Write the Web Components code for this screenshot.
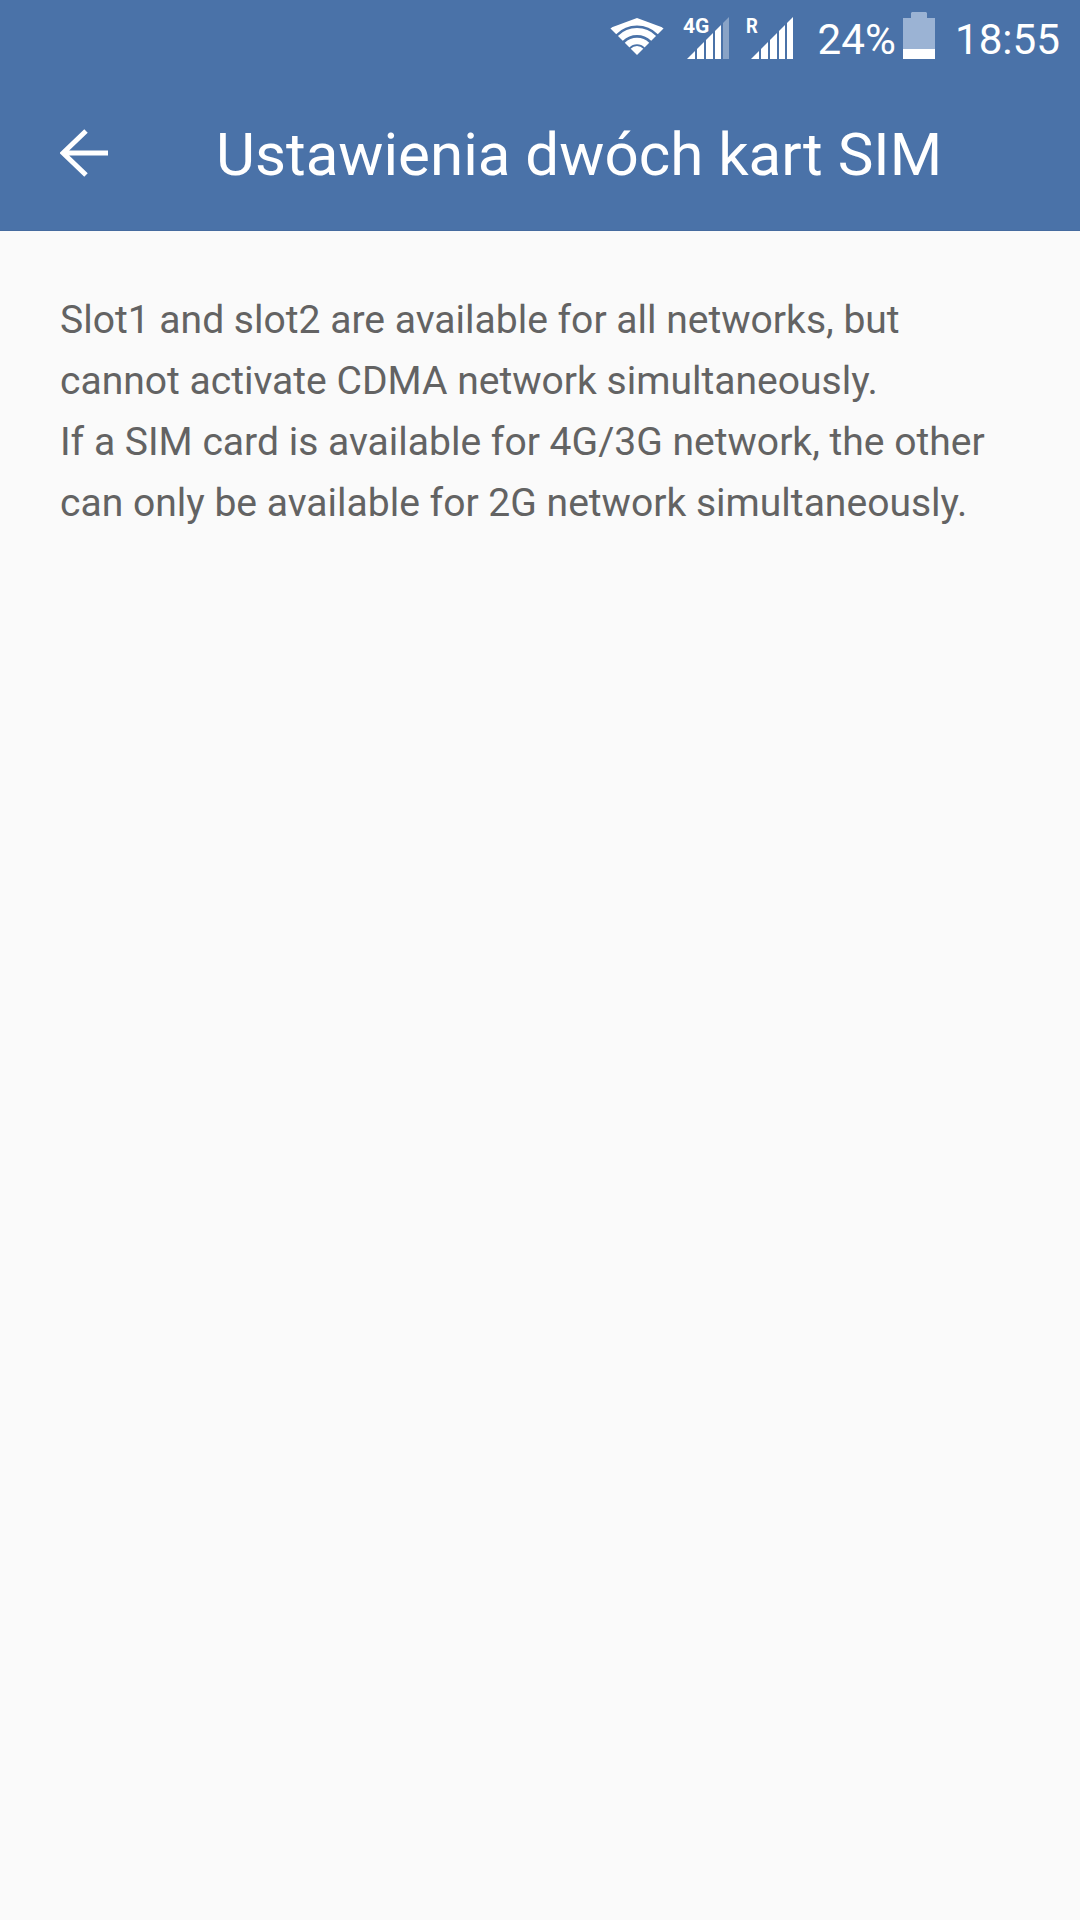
<!DOCTYPE html>
<html><head><meta charset="utf-8"><style>
html,body{margin:0;padding:0;background:#fafafa}
body{width:1080px;height:1920px;font-family:Roboto,"Noto Sans",sans-serif}
sim-screen{display:block;height:1920px}
</style></head><body>
<sim-screen></sim-screen>
<script>
const def=(n,html)=>customElements.define(n,class extends HTMLElement{constructor(){super();this.attachShadow({mode:'open'}).innerHTML=html}});
def('wifi-icon',`<style>:host{display:block;width:54px;height:38px}svg{display:block}</style>
<svg width="54" height="38" viewBox="0 0 54 38"><defs><clipPath id="w"><path d="M27 37L0 10L27 0L54 10Z"/></clipPath></defs><g clip-path="url(#w)" fill="none" stroke="#fff"><circle cx="27" cy="37" r="33.500" stroke-width="8"/><circle cx="27" cy="37" r="23.500" stroke-width="7"/><circle cx="27" cy="37" r="14" stroke-width="6.500"/><circle cx="27" cy="37" r="4.500" stroke-width="9"/></g></svg>`);
class SignalIcon extends HTMLElement{constructor(){super();
const dim=this.hasAttribute('dim'),lab=this.getAttribute('label');
this.attachShadow({mode:'open'}).innerHTML=`<style>:host{display:block;position:relative;width:48px;height:42px;margin-top:17px}
svg{position:absolute;right:0;bottom:0;display:block}
span{position:absolute;top:1px;left:${lab==='R'?'-2px':'-1px'};font:700 21px/16px Roboto,sans-serif;color:#fff;transform:scaleX(${lab==='R'?.88:1});transform-origin:0 0}</style>
<span>${lab}</span>
<svg width="42" height="42" viewBox="0 0 42 42"><g fill="#fff"><path d="M0 42L8 34V42Z"/><path d="M10 32L17 25V42H10Z"/><path d="M19 23L26 16V42H19Z"/><path d="M28 14L34 8V42H28Z"/></g><path fill="#fff" fill-opacity="${dim?.35:1}" d="M36 6L42 0V42H36Z"/></svg>`}}
customElements.define('signal-icon',SignalIcon);
def('battery-icon',`<style>:host{display:block;width:32px;height:47px;margin-top:12px}svg{display:block}</style>
<svg width="32" height="47" viewBox="0 0 32 47"><path fill="#9bb3d4" d="M9 0H23L24 1V6H32V37H0V6H8V1Z"/><rect y="37" width="32" height="10" fill="#fff"/></svg>`);
def('status-bar',`<style>:host{display:flex;align-items:flex-start;height:70px;padding:0 20px 0 610px;box-sizing:border-box;color:#fff;font:400 42.200px/1 Roboto,sans-serif}
.t{margin-top:19px;white-space:nowrap}
wifi-icon{margin-top:18px}
.a{margin-left:20px}.b{margin-left:19px}.c{margin-left:25px}.d{margin-left:7px}.e{margin-left:20px}</style>
<wifi-icon></wifi-icon><signal-icon class="a" label="4G" dim></signal-icon><signal-icon class="b" label="R"></signal-icon><span class="t c">24%</span><battery-icon class="d"></battery-icon><span class="t e">18:55</span>`);
def('app-bar',`<style>:host{display:flex;align-items:center;height:161px;box-sizing:border-box;padding:5px 0 0 60px;border-bottom:1px solid #456b9f;color:#fff;font:400 60.100px/1 Roboto,sans-serif}
svg{display:block;flex:none}h1{margin:5px 0 0 108px;font:inherit;white-space:nowrap}</style>
<svg width="48" height="48" viewBox="0 0 48 48"><path d="M48 24H3M26 2L3 24L26 46" fill="none" stroke="#fff" stroke-width="5"/></svg><h1>Ustawienia dwóch kart SIM</h1>`);
def('info-text',`<style>:host{display:block;padding:59px 60px 0;color:#636363;font:400 39.050px/61px Roboto,sans-serif}p{margin:0;white-space:nowrap}</style>
<p>Slot1 and slot2 are available for all networks, but<br>cannot activate CDMA network simultaneously.<br>If a SIM card is available for 4G/3G network, the other<br>can only be available for 2G network simultaneously.</p>`);
def('sim-screen',`<style>:host{display:block;background:#fafafa}header{background:#4a72a8}</style>
<header><status-bar></status-bar><app-bar></app-bar></header><info-text></info-text>`);
</script></body></html>
